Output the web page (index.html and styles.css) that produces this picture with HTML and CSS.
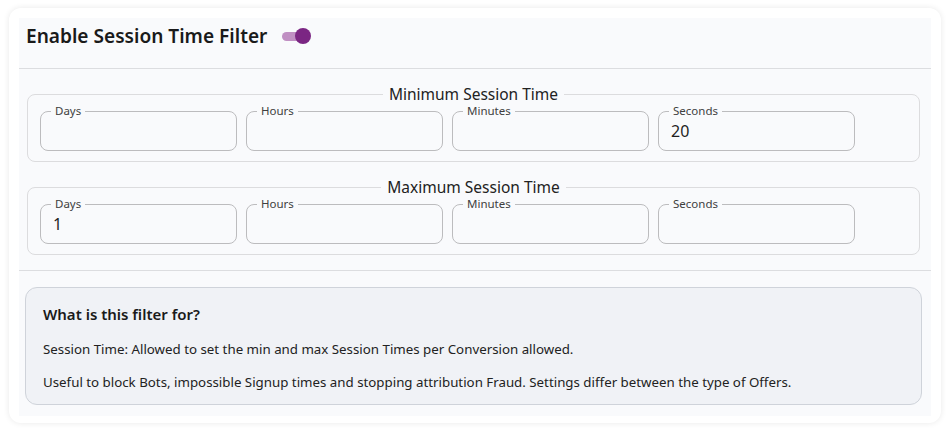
FILE: index.html
```html
<!DOCTYPE html>
<html>
<head>
<meta charset="utf-8">
<link rel="stylesheet" href="styles.css">
</head>
<body>
<div class="card">
  <div class="panel">
    <div class="header">
      <h2 class="title">Enable Session Time Filter</h2>
      <span class="toggle"><span class="track"></span><span class="thumb"></span></span>
    </div>
    <div class="ranges">
      <fieldset class="group">
        <legend class="group-legend">Minimum Session Time</legend>
        <div class="row">
          <fieldset class="field"><legend class="field-label">Days</legend><div class="value"></div></fieldset>
          <fieldset class="field"><legend class="field-label">Hours</legend><div class="value"></div></fieldset>
          <fieldset class="field"><legend class="field-label">Minutes</legend><div class="value"></div></fieldset>
          <fieldset class="field"><legend class="field-label">Seconds</legend><div class="value">20</div></fieldset>
        </div>
      </fieldset>
      <fieldset class="group">
        <legend class="group-legend">Maximum Session Time</legend>
        <div class="row">
          <fieldset class="field"><legend class="field-label">Days</legend><div class="value">1</div></fieldset>
          <fieldset class="field"><legend class="field-label">Hours</legend><div class="value"></div></fieldset>
          <fieldset class="field"><legend class="field-label">Minutes</legend><div class="value"></div></fieldset>
          <fieldset class="field"><legend class="field-label">Seconds</legend><div class="value"></div></fieldset>
        </div>
      </fieldset>
    </div>
    <div class="info-wrap">
      <div class="info">
        <h3 class="info-title">What is this filter for?</h3>
        <p class="info-text">Session Time: Allowed to set the min and max Session Times per Conversion allowed.</p>
        <p class="info-text">Useful to block Bots, impossible Signup times and stopping attribution Fraud. Settings differ between the type of Offers.</p>
      </div>
    </div>
  </div>
</div>
</body>
</html>
```

FILE: styles.css
```css
* { box-sizing: border-box; }
body {
  margin: 0;
  background: #ffffff;
  font-family: "Noto Sans", "Open Sans", sans-serif;
  color: #1f1f1f;
}
.card {
  margin: 8px 9px 8px 9px;
  width: 932px;
  height: 415px;
  padding: 10px;
  background: #ffffff;
  border-radius: 12px;
  box-shadow: 0 0 6px rgba(0, 0, 0, 0.09);
}
.panel {
  background: #f9fafc;
  height: 398px;
}
.header {
  height: 51px;
  display: flex;
  align-items: flex-start;
  padding: 6px 0 0 7px;
  border-bottom: 1px solid #dcdde0;
}
.title {
  margin: 0;
  font-size: 19.1px;
  line-height: 24px;
  font-weight: 600;
  color: #1a1a1a;
}
.toggle {
  position: relative;
  width: 30px;
  height: 18px;
  margin: 3px 0 0 15px;
  display: inline-block;
}
.track {
  position: absolute;
  left: 0;
  top: 5px;
  width: 24px;
  height: 9px;
  border-radius: 5px;
  background: #c08fc3;
}
.thumb {
  position: absolute;
  left: 13px;
  top: 1px;
  width: 16px;
  height: 16px;
  border-radius: 50%;
  background: #7b2683;
}
.ranges {
  padding: 16px 11px 15px 8px;
  border-bottom: 1px solid #dcdde0;
  display: flex;
  flex-direction: column;
  gap: 16px;
}
.group {
  margin: 0;
  padding: 0 12px 10px 12px;
  border: 1px solid #dcdcde;
  border-radius: 8px;
}
.group-legend {
  margin: 0 auto;
  padding: 0 6px;
  font-size: 15.5px;
  line-height: 18px;
  color: #222;
}
.row {
  display: flex;
  gap: 9px;
  padding-top: 1px;
}
.field {
  margin: 0;
  width: 197px;
  padding: 0 12px 4px 12px;
  border: 1px solid #bcbcbe;
  border-radius: 8px;
}
.field-label {
  margin-left: -2px;
  padding: 0 4px;
  font-size: 11.5px;
  line-height: 14px;
  color: #404040;
}
.value {
  height: 28px;
  font-size: 16px;
  line-height: 27px;
  color: #1f1f1f;
}
.info-wrap {
  padding: 16px 9px 11px 6px;
}
.info {
  background: #f0f2f6;
  border: 1px solid #cfd3da;
  border-radius: 12px;
  padding: 16px 17px 14px 17px;
  height: 118px;
}
.info-title {
  margin: 0 0 16px 0;
  font-size: 15px;
  font-weight: 600;
  line-height: 20px;
  color: #1a1a1a;
}
.info-text {
  margin: 0 0 14px 0;
  font-size: 13.3px;
  line-height: 19px;
  color: #222;
}
```
